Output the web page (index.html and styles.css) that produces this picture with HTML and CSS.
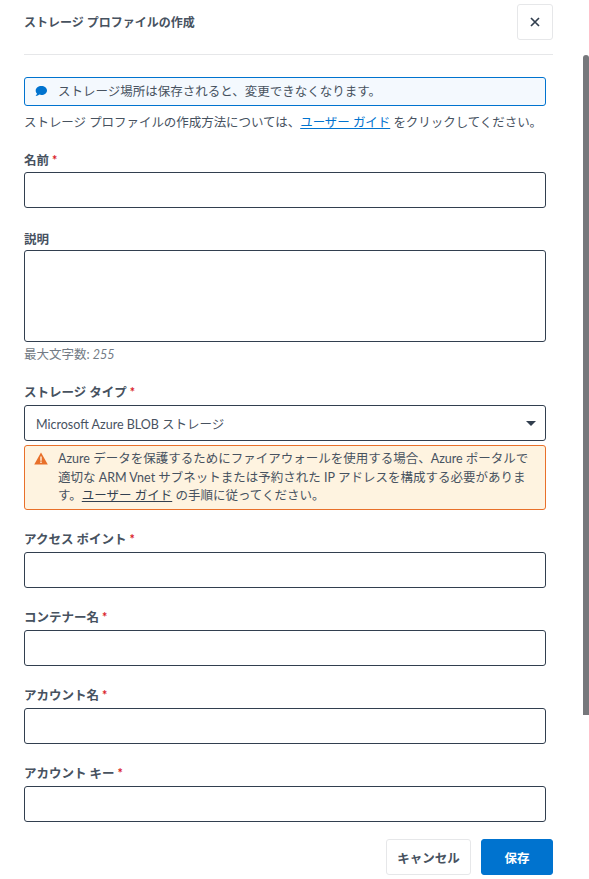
FILE: index.html
```html
<!DOCTYPE html>
<html lang="ja">
<head>
    <meta charset="UTF-8">
    <meta name="viewport" content="width=device-width, initial-scale=1.0">
    <title>ストレージ プロファイルの作成</title>
    <link rel="stylesheet" href="styles.css">
</head>
<body>
    <div class="dialog">
        <header class="dialog-header">
            <h1>ストレージ プロファイルの作成</h1>
            <button type="button" class="close-btn" aria-label="閉じる">
                <svg width="10" height="10" viewBox="0 0 10 10"><path d="M1 1l8 8M9 1l-8 8" stroke="#323f4f" stroke-width="1.7" fill="none"/></svg>
            </button>
        </header>

        <div class="dialog-body">
            <div class="notice notice-info">
                <svg class="notice-icon" width="14" height="14" viewBox="0 0 14 14"><path d="M7.4 2C10.5 2 13 3.900 13 6.400c0 2.500-2.500 4.500-5.600 4.500-.7 0-1.400-.1-2-.3C4.400 11.600 3 12.100 1.600 12c.7-.6 1.200-1.400 1.400-2.400C2.100 8.800 1.700 7.700 1.700 6.400 1.700 3.900 4.300 2 7.400 2z" fill="#0073cf"/></svg>
                <span>ストレージ場所は保存されると、変更できなくなります。</span>
            </div>
            <p class="guide">ストレージ プロファイルの作成方法については、<a href="#">ユーザー ガイド</a> をクリックしてください。</p>

            <div class="field field-first">
                <label>名前 <span class="req">*</span></label>
                <input type="text">
            </div>

            <div class="field field-notes">
                <label>説明</label>
                <textarea></textarea>
                <div class="hint">最大文字数: <em>255</em></div>
            </div>

            <div class="field">
                <label>ストレージ タイプ <span class="req">*</span></label>
                <div class="select">
                    <span>Microsoft Azure BLOB ストレージ</span>
                    <svg width="10" height="5" viewBox="0 0 10 5"><path d="M0 0h10L5 5z" fill="#323f4f"/></svg>
                </div>
                <div class="notice notice-warn">
                    <svg class="notice-icon" width="14" height="13" viewBox="0 0 14 13"><path d="M7 .5L13.800 12.500H.2z" fill="#e8702a"/><path d="M6.300 4.500h1.400v4.200H6.300zM6.300 9.600h1.400v1.400H6.300z" fill="#fff3e0"/></svg>
                    <span>Azure データを保護するためにファイアウォールを使用する場合、Azure ポータルで適切な ARM Vnet サブネットまたは予約された IP アドレスを構成する必要があります。<a href="#">ユーザー ガイド</a> の手順に従ってください。</span>
                </div>
            </div>

            <div class="field">
                <label>アクセス ポイント <span class="req">*</span></label>
                <input type="text">
            </div>
            <div class="field">
                <label>コンテナー名 <span class="req">*</span></label>
                <input type="text">
            </div>
            <div class="field">
                <label>アカウント名 <span class="req">*</span></label>
                <input type="text">
            </div>
            <div class="field">
                <label>アカウント キー <span class="req">*</span></label>
                <input type="text">
            </div>
        </div>

        <footer class="dialog-footer">
            <button type="button" class="btn">キャンセル</button>
            <button type="button" class="btn btn-primary">保存</button>
        </footer>

        <div class="scroll-thumb"></div>
    </div>
</body>
</html>
```

FILE: styles.css
```css
* {
    box-sizing: border-box;
}

body {
    margin: 0;
    background-color: #fff;
    color: #47525f;
    font-family: Lato, "Noto Sans CJK JP", sans-serif;
    font-size: 12.5px;
    overflow: hidden;
}

.dialog {
    position: relative;
    width: 589px;
    height: 879px;
    padding: 0 36px 0 24px;
    overflow: hidden;
}

.dialog-header {
    display: flex;
    justify-content: space-between;
    align-items: flex-start;
    height: 55px;
    padding-top: 4px;
    border-bottom: 1px solid #e6e7e9;
}

.dialog-header h1 {
    margin: 10px 0 0;
    font-size: 12px;
    line-height: 18px;
    font-weight: 700;
}

.close-btn {
    display: flex;
    align-items: center;
    justify-content: center;
    width: 36px;
    height: 36px;
    padding: 0;
    background-color: #fff;
    border: 1px solid #e6e7e9;
    border-radius: 3px;
}

.dialog-body {
    width: 522px;
    height: 784px;
    padding-top: 22px;
}

.notice {
    display: flex;
    border-radius: 3px;
}

.notice-icon {
    flex: none;
}

.notice-info {
    align-items: center;
    height: 29px;
    padding: 0 10px 2px 9px;
    gap: 10px;
    background-color: #f4f9fe;
    border: 1px solid #0073cf;
}

.guide {
    margin: 8px 0 0;
    line-height: 18px;
    letter-spacing: -0.05px;
}

.guide a {
    color: #0073cf;
}

.field {
    margin-top: 19px;
}

.field label {
    display: block;
    height: 23px;
    line-height: 22px;
    font-weight: 700;
}

.field-first {
    margin-top: 18px;
}

.field-first label {
    height: 22px;
}

.field-notes {
    margin-top: 22px;
}

.field-notes label {
    height: 20px;
    line-height: 20px;
}

.req {
    color: #d92027;
}

input,
textarea,
.select {
    display: block;
    width: 100%;
    background-color: #fff;
    border: 1px solid #323f4f;
    border-radius: 3px;
}

input {
    height: 36px;
}

textarea {
    height: 92px;
    resize: none;
}

.hint {
    height: 18px;
    margin-top: 3px;
    line-height: 20px;
    color: #737b85;
}

.select {
    display: flex;
    align-items: center;
    justify-content: space-between;
    height: 36px;
    padding: 0 9px 0 11px;
}

.notice-warn {
    margin-top: 4px;
    height: 65px;
    padding: 4px 8px 0 9px;
    gap: 10px;
    line-height: 18.5px;
    background-color: #fef3e0;
    border: 1px solid #e8702a;
}

.notice-warn .notice-icon {
    margin-top: 2px;
}

.notice-warn a {
    color: #323f4f;
}

.dialog-footer {
    display: flex;
    justify-content: flex-end;
    gap: 10px;
}

.btn {
    width: 85px;
    height: 36px;
    padding: 0;
    background-color: #fff;
    border: 1px solid #e6e7e9;
    border-radius: 3px;
    color: #47525f;
    font: inherit;
    font-weight: 700;
}

.btn-primary {
    width: 72px;
    background-color: #0073cf;
    border-color: #0073cf;
    color: #fff;
}

.scroll-thumb {
    position: absolute;
    top: 55px;
    right: 0;
    width: 6px;
    height: 660px;
    background-color: #76787c;
    border-radius: 3px 3px 0 0;
}
```
